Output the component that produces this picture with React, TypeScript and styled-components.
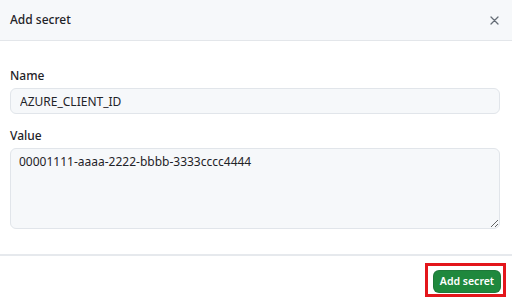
import styled, { createGlobalStyle } from 'styled-components'

const Global = createGlobalStyle`
  html, body {
    margin: 0;
    padding: 0;
    background: #fff;
  }
  body {
    font-family: "Noto Sans", "Open Sans", sans-serif;
    color: #1f2328;
  }
`;

function App() {
  return (
    <>
      <Global />
      <Dialog>
        <Header>
          <Title>Add secret</Title>
          <CloseButton aria-label="Close">
            <svg width="9" height="9" viewBox="0 0 9 9">
              <path d="M1 1 L8 8 M8 1 L1 8" stroke="#656d76" strokeWidth="1.3" strokeLinecap="round" />
            </svg>
          </CloseButton>
        </Header>
        <Body>
          <Field>
            <Label>Name</Label>
            <Input defaultValue="AZURE_CLIENT_ID" />
          </Field>
          <Field>
            <Label>Value</Label>
            <TextArea defaultValue="00001111-aaaa-2222-bbbb-3333cccc4444" />
          </Field>
        </Body>
        <Footer>
          <Highlight>
            <PrimaryButton>Add secret</PrimaryButton>
          </Highlight>
        </Footer>
      </Dialog>
    </>
  )
}

const Dialog = styled.div`
  width: 512px;
  height: 303px;
  display: flex;
  flex-direction: column;
  background: #fff;
`;

const Header = styled.div`
  height: 40px;
  display: flex;
  align-items: center;
  justify-content: space-between;
  padding: 0 12px 0 10px;
  background: #f6f8fa;
  border-bottom: 1px solid #e3e6ea;
`;

const Title = styled.h1`
  margin: 0;
  font-size: 12px;
  font-weight: 500;
  line-height: 18px;
`;

const CloseButton = styled.button`
  border: 0;
  background: transparent;
  padding: 0;
  width: 12px;
  height: 12px;
  display: flex;
  align-items: center;
  justify-content: center;
`;

const Body = styled.div`
  display: flex;
  flex-direction: column;
  gap: 13px;
  padding: 26px 12px 25px 10px;
`;

const Field = styled.div`
  display: flex;
  flex-direction: column;
  gap: 3px;
`;

const Label = styled.label`
  font-size: 12px;
  font-weight: 500;
  line-height: 18px;
`;

const fieldBase = `
  box-sizing: border-box;
  width: 100%;
  font-family: "Noto Sans", "Open Sans", sans-serif;
  font-size: 12px;
  color: #1f2328;
  background: #f6f8fa;
  border: 1px solid #e1e5ea;
  border-radius: 6px;
  outline: none;
`;

const Input = styled.input`
  ${fieldBase}
  height: 26px;
  padding: 0 9px;
`;

const TextArea = styled.textarea`
  ${fieldBase}
  display: block;
  height: 81px;
  padding: 4px 8px;
  line-height: 18px;
  resize: vertical;
`;

const Footer = styled.div`
  display: flex;
  justify-content: flex-end;
  padding: 7px 6px 0 0;
  border-top: 2px solid #e6e9ed;
`;

const Highlight = styled.div`
  border: 3px solid #e3161b;
  padding: 2px 2px 1px 5px;
`;

const PrimaryButton = styled.button`
  height: 23px;
  width: 68px;
  padding: 0;
  border: 1px solid rgba(31, 35, 40, 0.15);
  border-radius: 6px;
  background: #1f883d;
  color: #fff;
  font-family: "Noto Sans", "Open Sans", sans-serif;
  font-size: 10.5px;
  font-weight: 600;
`;

export default App
